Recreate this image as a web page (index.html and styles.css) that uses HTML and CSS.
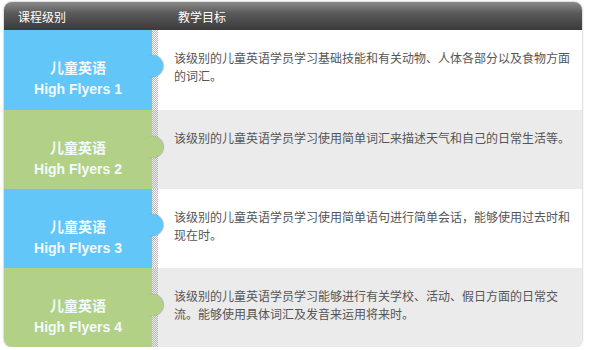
FILE: index.html
```html
<!DOCTYPE html>
<html lang="zh">
<head>
<meta charset="utf-8">
<link rel="stylesheet" href="styles.css">
</head>
<body>
<div class="table">
  <div class="head">
    <div class="h-level">课程级别</div>
    <div class="h-goal">教学目标</div>
  </div>
  <div class="row blue r1">
    <div class="level"><span>儿童英语</span><span>High Flyers 1</span></div>
    <div class="stripe"></div>
    <div class="desc">该级别的儿童英语学员学习基础技能和有关动物、人体各部分以及食物方面的词汇。</div>
  </div>
  <div class="row green grey">
    <div class="level"><span>儿童英语</span><span>High Flyers 2</span></div>
    <div class="stripe"></div>
    <div class="desc">该级别的儿童英语学员学习使用简单词汇来描述天气和自己的日常生活等。</div>
  </div>
  <div class="row blue">
    <div class="level"><span>儿童英语</span><span>High Flyers 3</span></div>
    <div class="stripe"></div>
    <div class="desc">该级别的儿童英语学员学习使用简单语句进行简单会话，能够使用过去时和现在时。</div>
  </div>
  <div class="row green grey">
    <div class="level"><span>儿童英语</span><span>High Flyers 4</span></div>
    <div class="stripe"></div>
    <div class="desc">该级别的儿童英语学员学习能够进行有关学校、活动、假日方面的日常交流。能够使用具体词汇及发音来运用将来时。</div>
  </div>
</div>
</body>
</html>
```
FILE: styles.css
```css
html, body { margin: 0; padding: 0; background: #fff; }
body { padding: 2px 0 0 4px; font-family: "Noto Sans CJK SC", "Liberation Sans", sans-serif; }
.table {
  width: 578px;
  border-radius: 8px;
  overflow: hidden;
  box-shadow: 0 0 2px rgba(0,0,0,0.45);
  background: #fff;
}
.head {
  height: 28px;
  display: flex;
  align-items: center;
  background: linear-gradient(#8a8a8a 0%, #5a5a5a 40%, #3a3a3a 100%);
  color: #fff;
  font-size: 12px;
}
.h-level { width: 160px; padding-left: 14px; }
.h-goal { padding-left: 0; }
.row {
  display: flex;
  height: 79px;
}
.row.r1 { height: 80px; }
.row.grey { background: #ebebeb; }
.level {
  width: 148px;
  position: relative;
  display: flex;
  flex-direction: column;
  align-items: center;
  justify-content: center;
  padding-top: 16px;
  box-sizing: border-box;
  color: #f2faff;
  font-family: "Liberation Sans", "Noto Sans CJK SC", sans-serif;
  font-weight: bold;
  font-size: 14px;
  line-height: 22px;
}
.level span:first-child { font-family: "Noto Sans CJK SC", sans-serif; font-weight: bold; font-size: 14px; }
.blue .level { background: #62c6f9; }
.green .level { background: #b3d186; }
.level::after {
  content: "";
  position: absolute;
  right: -11px;
  top: 25px;
  width: 22px;
  height: 22px;
  border-radius: 50%;
  z-index: 2;
  box-shadow: 1px 0 1px rgba(0,0,0,0.25);
}
.green .level::after { top: 26px; }
.blue .level::after { background: #62c6f9; }
.green .level::after { background: #b3d186; }
.stripe {
  width: 6px;
  background: conic-gradient(#b5b5b5 25%, transparent 0 50%, #b5b5b5 0 75%, transparent 0) 0 0 / 2px 2px;
}
.desc {
  flex: 1;
  padding: 19px 6px 0 16px;
  font-size: 12px;
  line-height: 18px;
  color: #555;
}
```
